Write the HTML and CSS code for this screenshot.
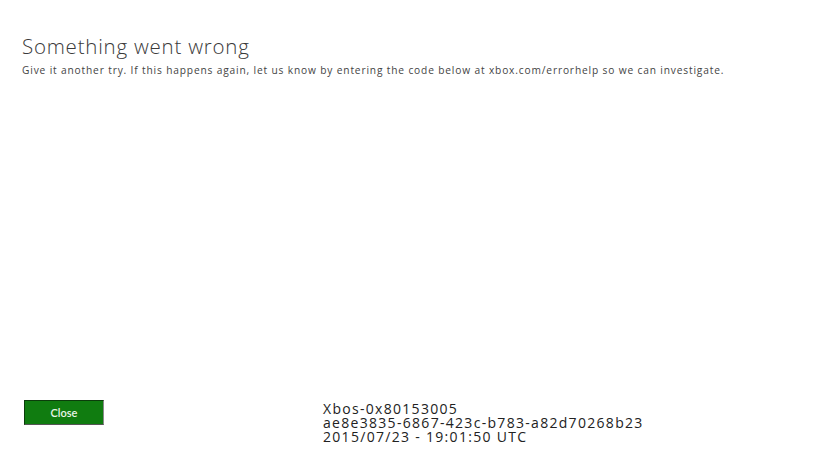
FILE: index.html
```html
<!DOCTYPE html>
<html>
<head>
<meta charset="utf-8">
<link rel="stylesheet" href="styles.css">
</head>
<body>
<div class="page">
  <div class="header">
    <h1 class="title">Something went wrong</h1>
    <p class="desc">Give it another try. If this happens again, let us know by entering the code below at xbox.com/errorhelp so we can investigate.</p>
  </div>
  <div class="footer">
    <button class="close">Close</button>
    <div class="code">
      <div>Xbos-0x80153005</div>
      <div>ae8e3835-6867-423c-b783-a82d70268b23</div>
      <div>2015/07/23 - 19:01:50 UTC</div>
    </div>
  </div>
</div>
</body>
</html>
```
FILE: styles.css
```css
html, body {
  margin: 0;
  padding: 0;
  background: #fff;
}
.page {
  width: 830px;
  height: 450px;
  display: flex;
  flex-direction: column;
  justify-content: space-between;
  font-family: "Open Sans", "Noto Sans", sans-serif;
  color: #333;
}
.header {
  padding: 33px 0 0 22px;
}
.title {
  margin: 0;
  font-weight: 300;
  font-size: 20.5px;
  letter-spacing: 0.77px;
  line-height: 27px;
  color: #3a3a3a;
}
.desc {
  margin: 3px 0 0 0;
  font-size: 10.2px;
  letter-spacing: 0.84px;
  line-height: 14px;
  color: #444;
}
.footer {
  display: flex;
  align-items: flex-start;
  padding: 0 0 6px 24px;
}
.close {
  width: 80px;
  height: 25px;
  margin-top: -2px;
  background: #107c10;
  border: 1px solid #0b3d0b;
  border-right-color: #8a8a8a;
  border-bottom-color: #555;
  color: #e8f4e8;
  font-family: "Lato", "Open Sans", sans-serif;
  font-size: 11px;
  font-weight: 600;
  padding: 0;
}
.code {
  margin-left: 219px;
  font-size: 14px;
  letter-spacing: 1.3px;
  line-height: 14px;
  color: #222;
}
```
